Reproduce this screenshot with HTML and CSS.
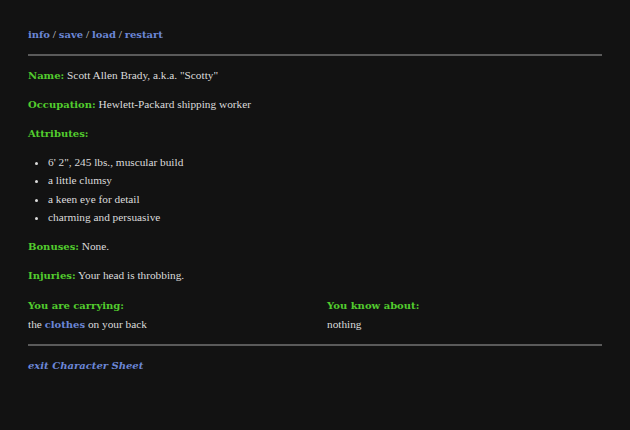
FILE: index.html
```html
<!DOCTYPE html>
<html>
<head>
<meta charset="utf-8">
<link rel="stylesheet" href="styles.css">
</head>
<body>
<div class="page">
  <nav class="nav"><a href="#">info</a> / <a href="#">save</a> / <a href="#">load</a> / <a href="#">restart</a></nav>
  <hr class="rule">
  <p><b class="label">Name:</b> Scott Allen Brady, a.k.a. "Scotty"</p>
  <p><b class="label">Occupation:</b> Hewlett-Packard shipping worker</p>
  <p><b class="label">Attributes:</b></p>
  <ul class="attrs">
    <li>6' 2", 245 lbs., muscular build</li>
    <li>a little clumsy</li>
    <li>a keen eye for detail</li>
    <li>charming and persuasive</li>
  </ul>
  <p><b class="label">Bonuses:</b> None.</p>
  <p><b class="label">Injuries:</b> Your head is throbbing.</p>
  <div class="cols">
    <div>
      <div class="label heading">You are carrying:</div>
      <div>the <a href="#">clothes</a> on your back</div>
    </div>
    <div>
      <div class="label heading">You know about:</div>
      <div>nothing</div>
    </div>
  </div>
  <hr class="rule rule-bottom">
  <div class="footer"><a href="#" class="exit">exit Character Sheet</a></div>
</div>
</body>
</html>
```
FILE: styles.css
```css
html, body {
  margin: 0;
  padding: 0;
  background: #121212;
}
body {
  font-family: "Liberation Serif", "DejaVu Serif", serif;
  font-size: 11.3px;
  line-height: 18.5px;
  color: #dcdcdc;
}
.page {
  padding: 25px 28px 0 28px;
}
a {
  color: #6b86d6;
  text-decoration: none;
  font-weight: bold;
  font-family: "DejaVu Serif", serif;
  font-size: 10px;
  line-height: 1;
}
.nav {
  color: #dcdcdc;
}
.rule {
  border: 0;
  height: 2px;
  background: #5a5a5a;
  margin: 10px 0 10px 0;
}
.rule-bottom {
  margin-top: 11px;
}
p {
  margin: 0 0 10.5px 0;
}
.label {
  color: #52cc2e;
  font-weight: bold;
  font-family: "DejaVu Serif", serif;
  font-size: 10px;
  line-height: 1;
}
.heading {
  padding-top: 3px;
  line-height: 16.5px;
}
.attrs {
  margin: 0 0 10.5px 0;
  padding-left: 20px;
  list-style: disc;
}
.cols {
  display: grid;
  grid-template-columns: 1fr 1fr;
  column-gap: 24px;
}
.exit {
  font-style: italic;
}
```
